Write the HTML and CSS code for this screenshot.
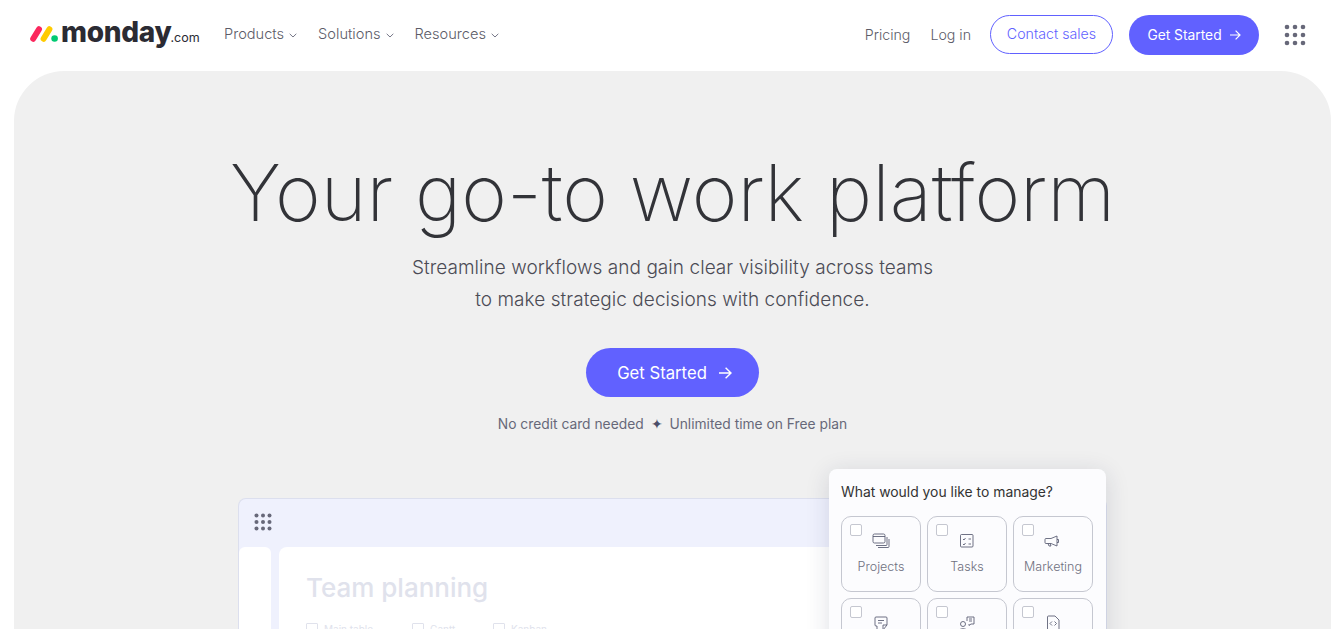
FILE: index.html
```html
<!DOCTYPE html>
<html lang="en">
<head>
<meta charset="utf-8">
<title>monday.com</title>
<link rel="stylesheet" href="styles.css">
</head>
<body>
<header class="topbar">
  <a class="logo">
    <svg class="logo-mark" width="28" height="16" viewBox="0 0 28 16"><path d="M3.200 12.800 9 3.200" stroke="#fb275d" stroke-width="6" stroke-linecap="round"/><path d="M13.600 12.800 19.400 3.200" stroke="#ffcb00" stroke-width="6" stroke-linecap="round"/><circle cx="24.600" cy="12.500" r="3.300" fill="#00ca72"/></svg>
    <span class="logo-word">monday</span><span class="logo-com">.com</span>
  </a>
  <nav class="menu">
    <a class="menu-item">Products <svg class="chev" viewBox="0 0 8 5"><path d="M.7.8 4 4 7.300.8" fill="none" stroke="#676879" stroke-width=".9"/></svg></a>
    <a class="menu-item">Solutions <svg class="chev" viewBox="0 0 8 5"><path d="M.7.8 4 4 7.300.8" fill="none" stroke="#676879" stroke-width=".9"/></svg></a>
    <a class="menu-item">Resources <svg class="chev" viewBox="0 0 8 5"><path d="M.7.8 4 4 7.300.8" fill="none" stroke="#676879" stroke-width=".9"/></svg></a>
  </nav>
  <div class="actions">
    <a class="menu-item pricing">Pricing</a>
    <a class="menu-item login">Log in</a>
    <a class="btn-outline">Contact sales</a>
    <a class="btn-solid">Get Started <svg class="arrow-s" viewBox="0 0 12 12"><path d="M1 6h10M6.600 1.600 11 6l-4.400 4.400" fill="none" stroke="#fff" stroke-width="1.200"/></svg></a>
    <svg class="apps" width="22" height="22" viewBox="0 0 22 22" fill="#676879"><circle cx="3" cy="3" r="2.300"/><circle cx="11" cy="3" r="2.300"/><circle cx="19" cy="3" r="2.300"/><circle cx="3" cy="11" r="2.300"/><circle cx="11" cy="11" r="2.300"/><circle cx="19" cy="11" r="2.300"/><circle cx="3" cy="19" r="2.300"/><circle cx="11" cy="19" r="2.300"/><circle cx="19" cy="19" r="2.300"/></svg>
  </div>
</header>
<main class="hero">
  <h1 class="title">Your go-to work platform</h1>
  <p class="subtitle">Streamline workflows and gain clear visibility across teams<br>to make strategic decisions with confidence.</p>
  <a class="btn-hero">Get Started <svg class="arrow-l" viewBox="0 0 14 14"><path d="M1 7h12M7.600 1.800 13 7l-5.400 5.200" fill="none" stroke="#fff" stroke-width="1.400"/></svg></a>
  <p class="note">No credit card needed <span class="spark">✦</span> Unlimited time on Free plan</p>
  <section class="board">
    <div class="board-top">
      <svg width="18" height="18" viewBox="0 0 18 18" fill="#676879"><circle cx="2.500" cy="2.500" r="2"/><circle cx="9" cy="2.500" r="2"/><circle cx="15.500" cy="2.500" r="2"/><circle cx="2.500" cy="9" r="2"/><circle cx="9" cy="9" r="2"/><circle cx="15.500" cy="9" r="2"/><circle cx="2.500" cy="15.500" r="2"/><circle cx="9" cy="15.500" r="2"/><circle cx="15.500" cy="15.500" r="2"/></svg>
    </div>
    <div class="board-body">
      <div class="side"></div>
      <div class="panel">
        <h2 class="panel-title">Team planning</h2>
        <div class="panel-tabs">
          <span class="tab tab-main"><i class="tab-icon"></i>Main table</span>
          <span class="tab tab-gantt"><i class="tab-icon"></i>Gantt</span>
          <span class="tab"><i class="tab-icon"></i>Kanban</span>
        </div>
      </div>
    </div>
    <aside class="picker">
      <p class="picker-title">What would you like to manage?</p>
      <div class="tiles">
        <div class="tile"><i class="check"></i>
          <svg class="tile-icon" viewBox="0 0 18 18" fill="none" stroke="#55586f" stroke-width=".85"><rect x="1" y="2" width="12" height="9" rx="1.500"/><path d="M1 4.500h12M15 5v7.500a1 1 0 0 1-1 1H4M17 7v7.500a1 1 0 0 1-1 1H6"/></svg>
          <span>Projects</span></div>
        <div class="tile"><i class="check"></i>
          <svg class="tile-icon" viewBox="0 0 18 18" fill="none" stroke="#55586f" stroke-width=".85"><rect x="2.500" y="2.500" width="12.500" height="12.500" rx="1"/><path d="M5 7l1 1 1.500-2M10.500 7h2.500M5 12l1 1 1.500-2M10.500 12h2.500"/></svg>
          <span>Tasks</span></div>
        <div class="tile"><i class="check"></i>
          <svg class="tile-icon" viewBox="0 0 18 18" fill="none" stroke="#55586f" stroke-width=".85"><path d="M2 6.500h5L13 4v10l-6-2.500H2a1 1 0 0 1-1-1v-3a1 1 0 0 1 1-1zM4 11.500l1 2.500h2l-1-2.500M13 7.500h1.500v3H13"/></svg>
          <span>Marketing</span></div>
        <div class="tile"><i class="check"></i>
          <svg class="tile-icon" viewBox="0 0 18 18" fill="none" stroke="#55586f" stroke-width=".85"><path d="M4 3h10a1 1 0 0 1 1 1v7l-4 5H6a1 1 0 0 1-1-1v-3H4a1 1 0 0 1-1-1V4a1 1 0 0 1 1-1zM6 6.500h6M6 9h4M15 11h-4v5"/></svg>
          <span>Design</span></div>
        <div class="tile"><i class="check"></i>
          <svg class="tile-icon" viewBox="0 0 18 18" fill="none" stroke="#55586f" stroke-width=".85"><circle cx="5" cy="10" r="2.500"/><path d="M1 17c0-3 8-3 8 0M9 7V3h7v7h-3l-2 1.500V10M11 5h3M11 7h3"/></svg>
          <span>CRM</span></div>
        <div class="tile"><i class="check"></i>
          <svg class="tile-icon" viewBox="0 0 18 18" fill="none" stroke="#55586f" stroke-width=".85"><path d="M4.500 2H11l4 4v9a1 1 0 0 1-1 1H4.500a1 1 0 0 1-1-1V3a1 1 0 0 1 1-1z"/><path d="M8 7.500 6 9.500l2 2M10.500 7.500l2 2-2 2"/></svg>
          <span>Software</span></div>
      </div>
    </aside>
  </section>
</main>
</body>
</html>
```
FILE: styles.css
```css
* { box-sizing: border-box; }
html, body { margin: 0; height: 629px; overflow: hidden; background: #fff; }
body { font-family: Inter, "Open Sans", sans-serif; color: #333; }
p, h1, h2 { margin: 0; }

.topbar { height: 71px; display: flex; align-items: center; padding: 0 27px 1px 30px; }
.logo { display: flex; align-items: baseline; width: 194px; color: #2b2b33; margin-top: -6px; }
.logo-mark { align-self: center; margin: 4px 3px 0 0; flex: none; }
.logo-word { font-size: 28px; font-weight: 800; letter-spacing: -.3px; line-height: 36px; }
.logo-com { font-size: 12.500px; font-weight: 400; margin-left: -1px; }
.menu { display: flex; gap: 21px; margin-top: -2px; }
.menu-item { font-size: 14.600px; font-weight: 300; color: #5c5c68; display: flex; align-items: center; gap: 5px; }
.chev { width: 8px; height: 5px; margin-top: 2px; }
.actions { margin-left: auto; display: flex; align-items: center; }
.pricing, .login { font-size: 14.200px; margin-top: -1px; }
.login { margin-left: 20px; margin-right: 19px; }
.btn-outline { width: 123px; height: 39px; margin-bottom: 1px; border: 1px solid #6161ff; border-radius: 20px; color: #6161ff; font-size: 14.200px; font-weight: 300; display: flex; align-items: center; justify-content: center; padding-bottom: 2px; }
.btn-solid { margin-left: 16px; width: 130px; height: 40px; background: #6161ff; border-radius: 20px; color: #fff; font-size: 13.800px; font-weight: 400; display: flex; align-items: center; justify-content: center; gap: 7px; flex: none; }
.arrow-s { width: 12px; height: 12px; }
.apps { margin-left: 25px; }

.hero { margin: 0 2px 0 14px; height: 600px; background: #f0f0f0; border-radius: 50px 50px 0 0; display: flex; flex-direction: column; align-items: center; padding-top: 77px; }
.title { font-size: 78px; font-weight: 200; line-height: 90px; color: #323338; white-space: nowrap; flex: none; }
.subtitle { margin-top: 14px; font-size: 19px; letter-spacing: .05px; font-weight: 300; line-height: 32px; text-align: center; color: #4b4b55; flex: none; }
.btn-hero { margin-top: 32px; width: 173px; height: 49px; flex: none; border-radius: 25px; background: #6161ff; color: #fff; font-size: 16.700px; font-weight: 400; display: flex; align-items: center; justify-content: center; gap: 11px; padding-left: 4px; }
.arrow-l { width: 14px; height: 14px; }
.note { margin-top: 18px; font-size: 13.800px; font-weight: 400; color: #676879; line-height: 18px; flex: none; }
.spark { margin: 0 3px; color: #4b4e69; }

.board { position: relative; margin-top: 65px; width: 869px; height: 200px; background: #eff1fd; border: 1px solid #dcdfee; border-bottom: 0; border-radius: 8px 8px 0 0; flex: none; }
.board-top { height: 48px; padding: 14px 15px; }
.board-top svg { display: block; }
.board-body { display: flex; gap: 8px; height: 151px; }
.side { width: 32px; background: #fff; border-radius: 6px 6px 0 0; }
.panel { flex: 1; background: #fff; border-radius: 8px 0 0 0; padding: 24px 27px; }
.panel-title { font-size: 26px; font-weight: 500; color: #e0e2ec; line-height: 34px; }
.panel-tabs { display: flex; margin-top: 17px; font-size: 10px; line-height: 14px; color: #e0e2ec; }
.tab { display: flex; align-items: center; gap: 6px; }
.tab-main { width: 106px; }
.tab-gantt { width: 81px; }
.tab-icon { width: 12px; height: 12px; border: 1px solid #e0e2ec; border-radius: 1px; flex: none; }

.picker { position: absolute; left: 590px; top: -30px; width: 277px; height: 190px; background: #fcfcfe; border-radius: 8px; padding: 14px 12px; box-shadow: 0 4px 24px rgba(29, 33, 70, .14); }
.picker-title { font-size: 13.900px; font-weight: 400; color: #333; line-height: 18px; }
.tiles { margin-top: 15px; display: grid; grid-template-columns: repeat(3, 80px); grid-auto-rows: 76px; gap: 6px; }
.tile { position: relative; border: 1px solid #c5c7d0; border-radius: 10px; display: flex; flex-direction: column; align-items: center; padding-top: 15px; gap: 9px; font-size: 12.500px; font-weight: 300; color: #6f7080; }
.check { position: absolute; left: 8px; top: 7px; width: 12px; height: 12px; border: 1px solid #c5c7d0; border-radius: 2px; background: #fff; }
.tile-icon { width: 18px; height: 18px; display: block; flex: none; }
```
